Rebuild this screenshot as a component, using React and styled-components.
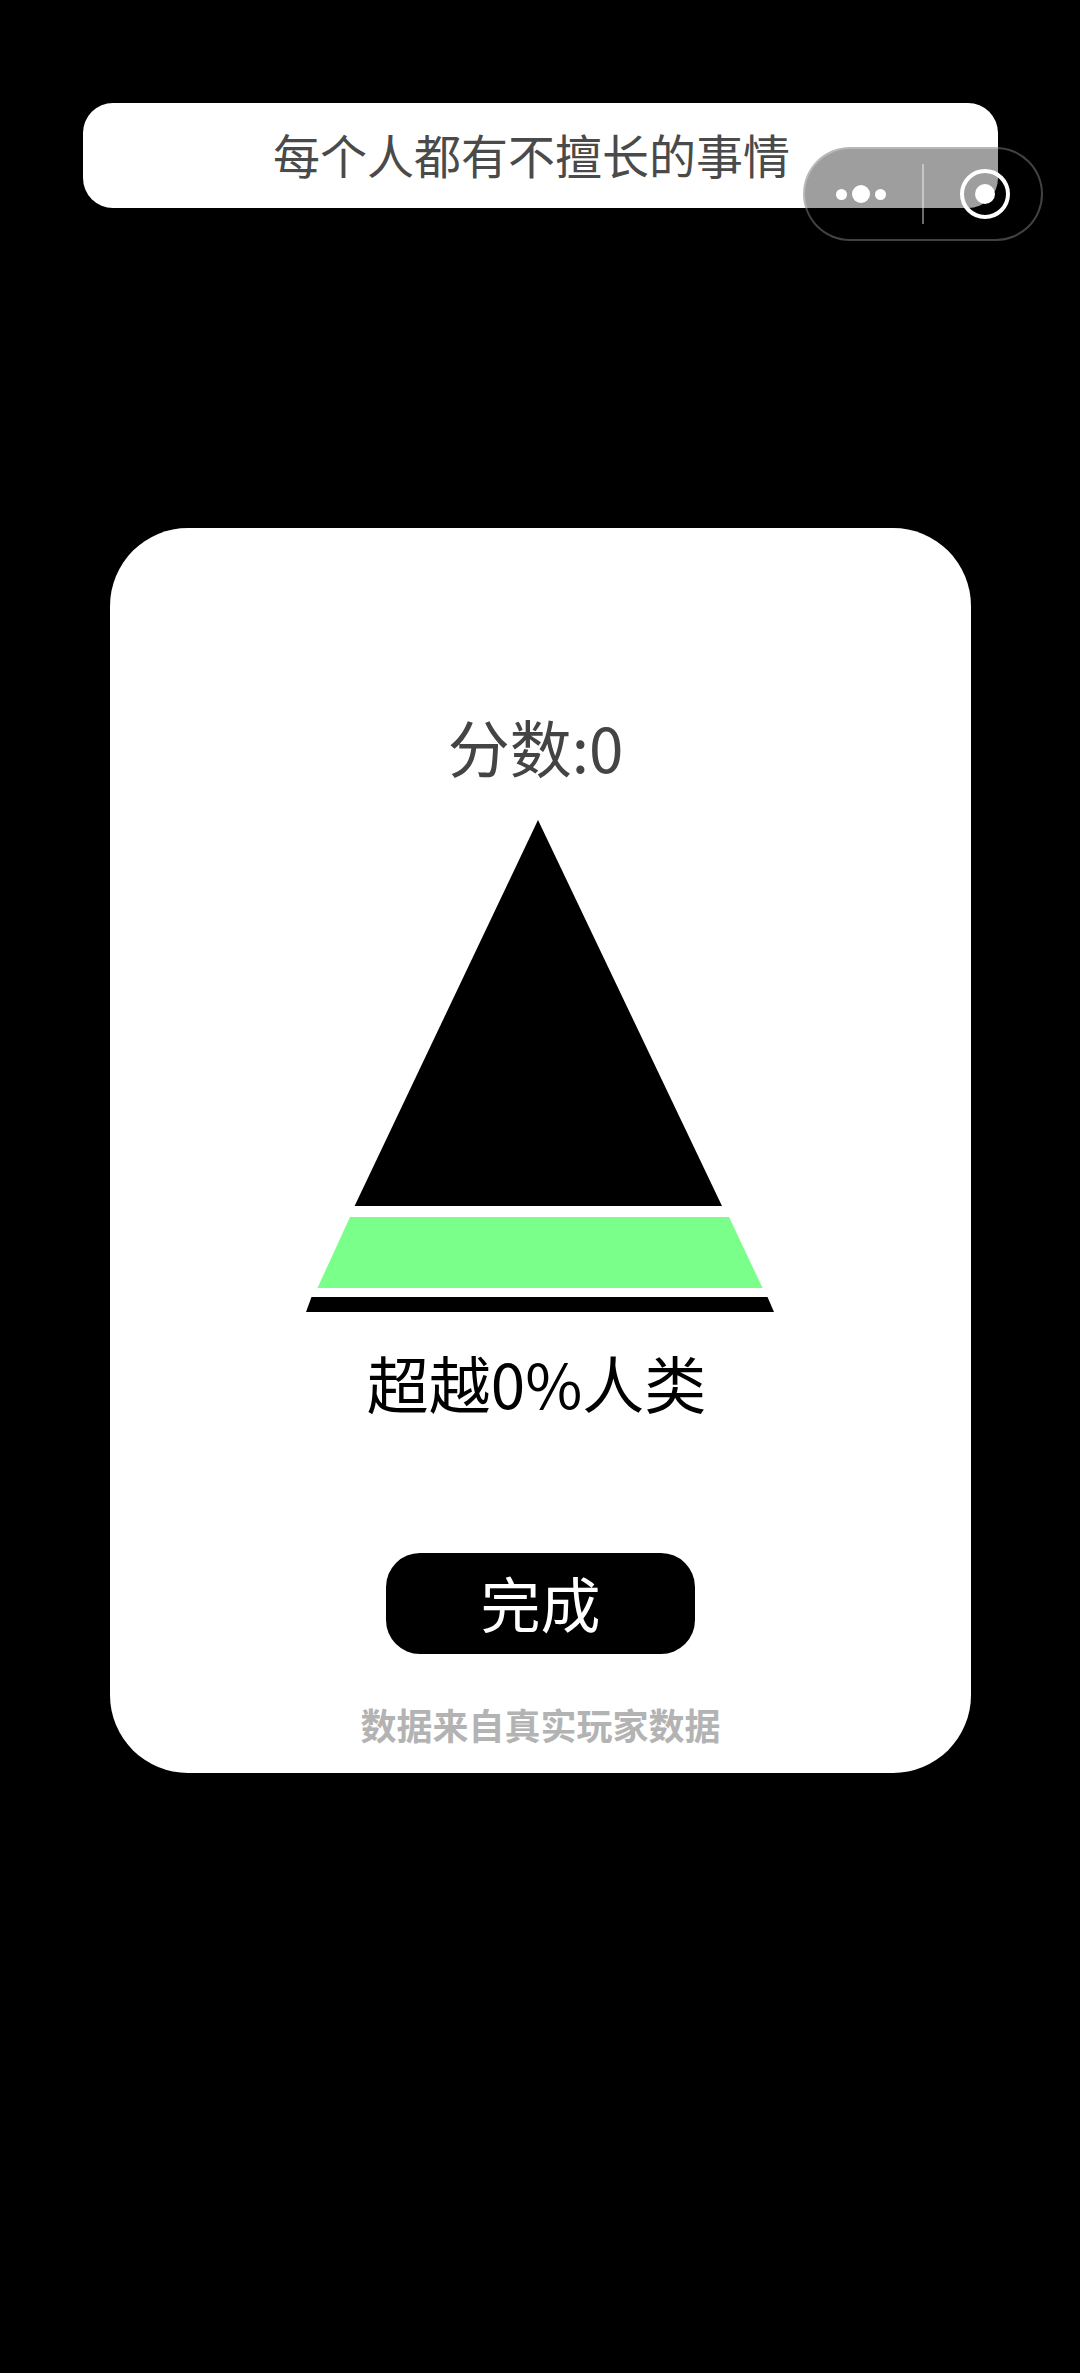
import React from 'react';
import styled, { createGlobalStyle } from 'styled-components';

const GlobalStyle = createGlobalStyle`
  html, body {
    margin: 0;
    padding: 0;
    background: #000;
  }
  body {
    font-family: "Noto Sans CJK SC", "Noto Sans", sans-serif;
  }
`;

const App = () => {
  return (
    <Page>
      <GlobalStyle />

      <TitleBar>每个人都有不擅长的事情</TitleBar>

      <Capsule>
        <MoreDots>
          <Dot $size={11} />
          <Dot $size={18} />
          <Dot $size={11} />
        </MoreDots>
        <Divider />
        <CloseButton>
          <CloseCore />
        </CloseButton>
      </Capsule>

      <Card>
        <Score>分数:0</Score>

        <Pyramid viewBox="0 0 468 492" aria-hidden="true">
          <polygon points="232,0 416,386 48.6,386" fill="#000" />
          <polygon points="44,397 423,397 456.6,468 11.5,468" fill="#7AFF8A" />
          <polygon points="5.5,477 461.5,477 468,492 0,492" fill="#000" />
        </Pyramid>

        <Result>超越0%人类</Result>

        <DoneButton>完成</DoneButton>

        <Note>数据来自真实玩家数据</Note>
      </Card>
    </Page>
  );
};

const Page = styled.div`
  position: relative;
  display: flex;
  flex-direction: column;
  box-sizing: border-box;
  width: 1080px;
  height: 2373px;
  padding-top: 103px;
  background: #000;
  overflow: hidden;
`;

const TitleBar = styled.div`
  display: flex;
  align-items: center;
  justify-content: center;
  box-sizing: border-box;
  width: 915px;
  height: 105px;
  margin-left: 83px;
  padding-right: 18px;
  padding-bottom: 4px;
  border-radius: 30px;
  background: #fff;
  color: #4a4a4a;
  font-size: 47px;
`;

const Capsule = styled.div`
  position: absolute;
  top: 147px;
  left: 803px;
  display: flex;
  align-items: center;
  box-sizing: border-box;
  width: 240px;
  height: 94px;
  border: 2px solid rgba(255, 255, 255, 0.26);
  border-radius: 47px;
  background: rgba(0, 0, 0, 0.38);
`;

const MoreDots = styled.div`
  display: flex;
  align-items: center;
  justify-content: center;
  gap: 5px;
  width: 117px;
  padding-right: 6px;
  box-sizing: border-box;
`;

const Dot = styled.span`
  width: ${({ $size }) => $size}px;
  height: ${({ $size }) => $size}px;
  border-radius: 50%;
  background: #fff;
`;

const Divider = styled.div`
  width: 2px;
  height: 60px;
  background: rgba(255, 255, 255, 0.42);
`;

const CloseButton = styled.div`
  display: flex;
  align-items: center;
  justify-content: center;
  box-sizing: border-box;
  width: 50px;
  height: 50px;
  margin-left: 36px;
  border: 4px solid #fff;
  border-radius: 50%;
`;

const CloseCore = styled.div`
  width: 20px;
  height: 20px;
  border-radius: 50%;
  background: #fff;
`;

const Card = styled.div`
  display: flex;
  flex-direction: column;
  align-items: center;
  box-sizing: border-box;
  width: 861px;
  height: 1245px;
  margin-top: 320px;
  margin-left: 110px;
  padding-top: 178px;
  border-radius: 78px;
  background: #fff;
`;

const Score = styled.div`
  margin-right: 10px;
  color: #444;
  font-size: 62px;
  line-height: 80px;
`;

const Pyramid = styled.svg`
  display: block;
  flex: none;
  width: 468px;
  height: 492px;
  margin-top: 34px;
  margin-right: 2px;
`;

const Result = styled.div`
  margin-top: 30px;
  margin-right: 8px;
  color: #000;
  font-size: 62px;
  line-height: 80px;
`;

const DoneButton = styled.div`
  display: flex;
  align-items: center;
  justify-content: center;
  flex: none;
  box-sizing: border-box;
  width: 309px;
  height: 101px;
  margin-top: 131px;
  padding-bottom: 4px;
  border-radius: 34px;
  background: #000;
  color: #fff;
  font-size: 60px;
`;

const Note = styled.div`
  margin-top: 45px;
  color: #b3b3b3;
  font-size: 36px;
  font-weight: 700;
  line-height: 50px;
`;

export default App;
